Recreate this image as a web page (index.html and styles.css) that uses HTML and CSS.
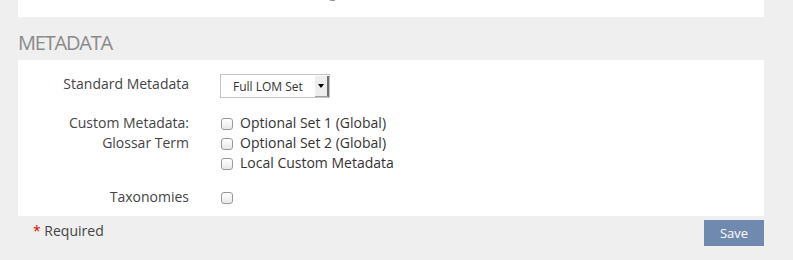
FILE: index.html
```html
<!DOCTYPE html>
<html lang="en">
<head>
  <meta charset="UTF-8" />
  <title>Metadata settings</title>
  <link rel="stylesheet" href="styles.css">
</head>
<body>

  <div class="panel panel-top">
    <p class="panel-note">Select the metadata used for this learning</p>
  </div>

  <h2 class="section-title">METADATA</h2>

  <form class="panel metadata-form">
    <div class="form-row">
      <label class="form-label" for="stdMeta">Standard Metadata</label>
      <div class="select" id="stdMeta">
        <span class="select-value">Full LOM Set</span>
        <span class="select-arrow"></span>
      </div>
    </div>

    <div class="form-row">
      <div class="form-label">Custom Metadata:<br>Glossar Term</div>
      <div class="check-list">
        <label class="check"><input type="checkbox"> Optional Set 1 (Global)</label>
        <label class="check"><input type="checkbox"> Optional Set 2 (Global)</label>
        <label class="check"><input type="checkbox"> Local Custom Metadata</label>
      </div>
    </div>

    <div class="form-row">
      <div class="form-label">Taxonomies</div>
      <div class="check-list">
        <label class="check"><input type="checkbox"></label>
      </div>
    </div>
  </form>

  <div class="form-footer">
    <p class="required"><span class="star">*</span> Required</p>
    <button class="save-btn" type="button">Save</button>
  </div>

</body>
</html>
```

FILE: styles.css
```css
* {
  margin: 0;
  padding: 0;
  box-sizing: border-box;
}

body {
  font-family: 'Open Sans', 'Liberation Sans', sans-serif;
  font-size: 14px;
  background-color: #efefef;
  color: #333;
  line-height: 20px;
}

.panel {
  background-color: #fff;
  margin: 0 29px 0 18px;
}

.panel-top {
  height: 17px;
  overflow: hidden;
}

.panel-note {
  width: 318px;
  margin-top: -16px;
  text-align: right;
  color: #888;
  font-size: 13px;
  line-height: 18px;
}

.section-title {
  font-size: 20px;
  font-weight: normal;
  letter-spacing: -1.2px;
  line-height: 27px;
  color: #8a8a8a;
  margin: 12px 0 4px 18px;
}

.metadata-form {
  display: flex;
  flex-direction: column;
  gap: 15px;
  padding: 14px 0 9px;
}

.form-row {
  display: flex;
  align-items: flex-start;
  gap: 31px;
}

.form-row:last-child {
  margin-top: -1px;
}

.form-label {
  width: 171px;
  text-align: right;
  color: #444;
}

.check-list {
  display: flex;
  flex-direction: column;
}

.check {
  display: flex;
  align-items: center;
  gap: 7px;
  height: 20px;
  color: #333;
}

.check input {
  appearance: none;
  -webkit-appearance: none;
  width: 12px;
  height: 12px;
  margin: 2px 0 0 1px;
  border: 1px solid #9a9a9a;
  border-radius: 3px;
  background: linear-gradient(#fff, #e8e8e8);
}

.select {
  display: flex;
  width: 110px;
  height: 24px;
  border: 1px solid #c4c4c4;
  background-color: #fff;
}

.select-value {
  flex: 1;
  padding-left: 12px;
  font-size: 12px;
  line-height: 23px;
  color: #333;
}

.select-arrow {
  width: 14px;
  margin: 1px 0 0;
  background-color: #eeeeee;
  border-right: 2px solid #6e6e6e;
  border-bottom: 1px solid #a0a0a0;
  display: flex;
  align-items: center;
  justify-content: center;
}

.select-arrow::after {
  content: '';
  border-left: 3px solid transparent;
  border-right: 3px solid transparent;
  border-top: 4px solid #000;
  margin-top: -1px;
}

.form-footer {
  display: flex;
  justify-content: space-between;
  align-items: flex-start;
  margin: 4px 29px 0 18px;
}

.required {
  padding-left: 15px;
  margin-top: 1px;
  color: #444;
}

.star {
  color: #e00000;
}

.save-btn {
  width: 60px;
  height: 26px;
  border: none;
  background-color: #7089ae;
  color: #fff;
  font-family: inherit;
  font-size: 13px;
  cursor: pointer;
}
```
